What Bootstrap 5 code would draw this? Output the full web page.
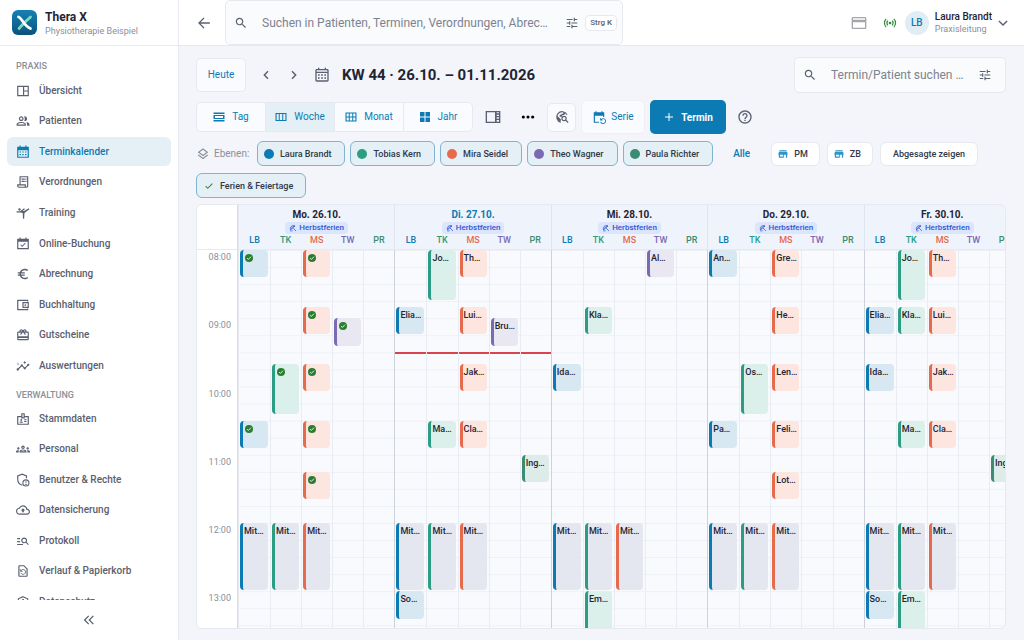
<!DOCTYPE html>
<html lang="de">
<head>
<meta charset="utf-8">
<meta name="viewport" content="width=device-width, initial-scale=1">
<title>Thera X – Terminkalender</title>
<link href="https://cdn.jsdelivr.net/npm/bootstrap@5.3.0/dist/css/bootstrap.min.css" rel="stylesheet">
<style>
  :root { --brand: #0c7bb3; --ink: #1f2433; --soft: #5a6070; --mute: #8b8f9a; --line: #e6e9ef; --tint: #e4f0f6; --ok: #2f8a3b; }
  body { font-family: Roboto, "Liberation Sans", sans-serif; font-size: 10px; line-height: 14px; color: var(--ink); background: #f3f5fa; }
  .ico { width: 14px; height: 14px; fill: currentColor; flex: none; }
  .ico-sm { width: 12px; height: 12px; }
  .ico-xs { width: 10px; height: 10px; }
  .ico-xxs { width: 8px; height: 8px; }
  .ico-lg { width: 16px; height: 16px; }

  .side { width: 179px; background: #fff; border-right: 1px solid var(--line); }
  .side-head { height: 46px; padding: 0 12px; border-bottom: 1px solid var(--line); }
  .side-title { font-size: 12px; line-height: 16px; color: var(--ink); }
  .side-sub, .user-role { font-size: 9px; line-height: 12px; color: var(--mute); }
  .side-nav { min-height: 0; overflow: hidden; padding: 13px 7px 0; }
  .side-label { font-size: 9px; line-height: 14px; margin: 0; padding: 0 9px; color: var(--mute); font-weight: 500; }
  .side-list { display: grid; grid-auto-rows: 1fr; margin: 0; padding: 0; list-style: none; }
  .side-main { min-height: 306px; margin: 3px 0 6px; }
  .side-admin { min-height: 214px; margin-top: 2px; }
  .side-link { height: 29px; padding: 0 9px; gap: 9px; border-radius: 6px; color: var(--soft); text-decoration: none; font-weight: 500; white-space: nowrap; }
  .side-link.active { background: var(--tint); color: var(--brand); }
  .side-foot { height: 40px; }

  .bare { border: 0; background: none; padding: 0; line-height: 1; color: var(--soft); }
  .topbar { height: 46px; background: #fff; border-bottom: 1px solid var(--line); padding: 0 14px 0 18px; }
  .topbar .back { margin-right: 14px; }
  .searchbox { background: #f9fbfd; border: 1px solid var(--line); border-radius: 5px; color: var(--soft); padding: 0 5px 0 8px; }
  .searchbox > svg { margin-right: 14px; }
  .searchbox input { border: 0; background: none; outline: 0; min-width: 0; padding: 0; font-size: 12px; color: var(--ink); text-overflow: ellipsis; }
  .searchbox input::placeholder { color: #7d828f; opacity: 1; }
  .searchbox .filter { margin: 0 6px; }
  .search-main { width: 398px; height: 45px; }
  .search-cal { width: 212px; height: 36px; padding-right: 7px; }
  .key { font-size: 8px; line-height: 14px; font-weight: 500; color: var(--soft); border: 1px solid var(--line); border-radius: 4px; background: #fff; padding: 0 4px; font-family: inherit; }
  .avatar { width: 24px; height: 24px; border-radius: 50%; background: #e0edf5; color: var(--brand); font-size: 10px; font-weight: 500; margin-right: 6px; }
  .user-name { font-size: 10px; line-height: 13px; font-weight: 500; color: var(--ink); }

  .main { min-width: 0; }
  .content { min-height: 0; padding: 11px 18px 11px 17px; }
  .headrow, .toolrow { margin-bottom: 7px; }
  .toolrow { height: 34px; }
  .tool { background: #f9fbfe; border: 1px solid var(--line); border-radius: 5px; color: var(--brand); font-size: 10px; line-height: 14px; padding: 0; }
  .tool:hover { background: #fff; color: var(--brand); border-color: var(--line); }
  .range { font-size: 15px; line-height: 20px; font-weight: 700; margin: 0; }
  .today { width: 50px; height: 34px; }
  .step { margin-left: 12px; }
  .step + .range { margin-left: 12px; }
  .views .tool { width: 70px; height: 30px; gap: 7px; }
  .views .tool.active { background: var(--tint); color: var(--brand); border-color: var(--line); }
  .wide { margin: 0 8px 0 12px; }
  .square { width: 29px; height: 29px; margin-left: 4px; }
  .serie { width: 64px; height: 34px; margin: 0 5px; gap: 5px; border-color: #eef0f5; }
  .new-btn, .new-btn:hover { height: 34px; width: 76px; background: var(--brand); color: #fff; border: 0; font-size: 10px; font-weight: 700; border-radius: 5px; padding: 0; gap: 6px; }
  .help { margin-left: 11px; }

  .layers { gap: 7px 5px; margin-bottom: 6px; }
  .layers-label { min-width: 56px; gap: 4px; }
  .layer, .plain { font-size: 9px; line-height: 14px; font-weight: 500; color: #30394a; border-radius: 6px; white-space: nowrap; }
  .layer { height: 25px; border: 1px solid #7fb5d0; background: var(--tint); padding: 0 13px 0 6px; gap: 6px; }
  .layer.check { padding: 0 12px 0 7px; }
  .layer .dot { width: 10px; height: 10px; border-radius: 50%; }
  .all { font-size: 10px; font-weight: 500; padding: 0 14px 0 15px; }
  .plain { height: 24px; border: 1px solid var(--line); background: #fff; padding: 0 11px 0 6px; gap: 6px; margin-left: 2px; }
  .plain.cancelled { padding: 0 12px; }

  .cal { min-height: 0; overflow: hidden; border: 1px solid var(--line); border-radius: 6px; background: #f9fafd; }
  .times { width: 41px; flex: none; background: #fff; border-right: 1px solid #d8dce4; }
  .cal-head { height: 45px; border-bottom: 1px solid var(--line); flex: none; }
  .slots { height: 387px; display: grid; grid-template-rows: repeat(68, 1fr); grid-template-columns: 100%; flex: none; }
  .times .slots { color: var(--mute); font-size: 9px; line-height: 14px; text-align: right; padding-right: 6px; }
  .week { min-width: 0; overflow: hidden; }
  .days { min-width: 782px; display: grid; grid-template-columns: repeat(5, 1fr); }
  .day { border-left: 1px solid #cdd2dc; }
  .day:first-child { border-left-color: #e6e9ef; }
  .day .cal-head { background: #eff3fb; }
  .day + .day .cal-head { margin-left: -1px; border-left: 1px solid #dfe4ee; }
  .day-name { font-size: 10px; line-height: 14px; font-weight: 700; margin: 0; padding-top: 3px; }
  .holiday { font-size: 8px; line-height: 12px; font-weight: 500; color: #2f55d4; background: #dbe5fb; border-radius: 4px; padding: 0 4px; gap: 2px; }
  .people { display: grid; grid-template-columns: repeat(5, 1fr); }
  .initials { font-size: 9px; line-height: 13px; font-weight: 500; text-align: center; color: var(--c); }
  .person + .person { border-left: 1px solid #e9ecf2; }
  .person { background-image: linear-gradient(#edf0f5 1px, transparent 1px); background-size: 100% calc(100% * 15 / 340); }
  .appt { grid-column: 1; margin: 0 2px 1px 1px; border-left: 3px solid var(--c); border-radius: 4px; background: var(--bg); padding: 1px 0 0 1px; font-size: 9px; line-height: 14px; font-weight: 500; overflow: hidden; white-space: nowrap; }
  .appt svg { display: block; margin: 3px 0 0 1px; color: #2b7d32; }
  .now { grid-column: 1; height: 2px; background: #d8434e; }
  .lb { --c: #0c7bb3; --bg: #d7e8f3; } .tk { --c: #2a9d84; --bg: #dbf0ea; } .ms { --c: #e66a4b; --bg: #fde6e0; }
  .tw { --c: #7a69b3; --bg: #e9e7f2; } .pr { --c: #3a8c72; --bg: #ddece8; }
  .rest { --bg: #e4e7f0; }
  .dot { background: var(--c); }
  .soft { color: var(--soft); }
  .mute { color: var(--mute); }
  .brand { color: var(--brand); }
  .ok { color: var(--ok); }
  .shop { color: #2f95c8; }
  .faint { color: #a5a7ab; }
</style>
</head>
<body class="vh-100 overflow-hidden d-flex">

<svg class="d-none" xmlns="http://www.w3.org/2000/svg">
  <symbol id="i-board" viewBox="0 0 24 24"><path d="M2 3v18h20V3H2zm2 2h8v14H4V5zm16 14h-6v-6h6v6zm0-8h-6V5h6v6z"/></symbol>
  <symbol id="i-people" viewBox="0 0 24 24"><path d="M9 12c2.200 0 4-1.800 4-4s-1.800-4-4-4-4 1.800-4 4 1.800 4 4 4zm0-6c1.100 0 2 .9 2 2s-.9 2-2 2-2-.9-2-2 .9-2 2-2zm0 7.500c-2.700 0-8 1.300-8 4V20h16v-2.500c0-2.700-5.300-4-8-4zM15 18H3v-.5c0-.7 3.100-2 6-2s6 1.300 6 2v.5zM15 4c2.200 0 4 1.800 4 4s-1.800 4-4 4c-.3 0-.7 0-1-.1.600-1.100 1-2.500 1-3.900s-.4-2.800-1-3.900c.3-.1.700-.1 1-.1zm2.500 9.900c2.800.6 5.500 1.800 5.500 3.600V20h-4v-2.500c0-1.400-.6-2.600-1.500-3.600z"/></symbol>
  <symbol id="i-cal" viewBox="0 0 24 24"><path d="M20 3h-2V1h-2v2H8V1H6v2H4c-1.100 0-2 .9-2 2v15c0 1.100.9 2 2 2h16c1.100 0 2-.9 2-2V5c0-1.100-.9-2-2-2zm0 17H4V9h16v11zm0-13H4V5h16v2zM6 11h2.500v2H6zM10.700 11h2.500v2h-2.500zM15.500 11H18v2h-2.500zM6 15.500h2.500v2H6zM10.700 15.500h2.500v2h-2.500zM15.500 15.500H18v2h-2.500z"/></symbol>
  <symbol id="i-calfill" viewBox="0 0 24 24"><path d="M20 3h-2V1h-2v2H8V1H6v2H2v19h20V3h-2zm0 17H4V9h16v11zM6 11h2.500v2H6zM10.700 11h2.500v2h-2.500zM15.500 11H18v2h-2.500zM6 15.500h2.500v2H6zM10.700 15.500h2.500v2h-2.500zM15.500 15.500H18v2h-2.500z"/></symbol>
  <symbol id="i-receipt" viewBox="0 0 24 24"><path d="M6 2v14H2v3c0 1.700 1.300 3 3 3h13c1.700 0 3-1.300 3-3V2H6zm9 18H5c-.6 0-1-.4-1-1v-1h11v2zm4-1c0 .6-.4 1-1 1s-1-.4-1-1v-3H8V4h11v15zM9.500 6H15v2H9.500zM16 6h2v2h-2zM9.500 10H15v2H9.500zM16 10h2v2h-2z"/></symbol>
  <symbol id="i-gym" viewBox="0 0 24 24"><path d="M4 6c0-1.100.9-2 2-2s2 .9 2 2-.9 2-2 2-2-.9-2-2zM1 9h6l7-5 1.310 1.520L11.140 8.500H14L21.800 4 23 5.400 14.500 12 14 22h-2l-.5-10L8 11H1V9z"/></symbol>
  <symbol id="i-avail" viewBox="0 0 24 24"><path d="M16.530 11.060L15.470 10l-4.880 4.880-2.120-2.120-1.060 1.060L10.590 17l5.940-5.940zM20 3h-2V1h-2v2H8V1H6v2H2v18h20V3h-2zm0 16H4V8h16v11z"/></symbol>
  <symbol id="i-euro" viewBox="0 0 24 24"><path d="M15 18.500c-2.510 0-4.680-1.420-5.760-3.500H15v-2H8.580c-.05-.33-.08-.66-.08-1s.03-.67.08-1H15V9H9.240C10.320 6.920 12.500 5.500 15 5.500c1.610 0 3.090.59 4.230 1.570L21 5.300C19.410 3.870 17.300 3 15 3c-3.920 0-7.240 2.510-8.480 6H3v2h3.060c-.04.33-.06.66-.06 1s.02.67.06 1H3v2h3.520c1.240 3.490 4.560 6 8.480 6 2.310 0 4.410-.87 6-2.300l-1.780-1.770c-1.130.98-2.600 1.570-4.220 1.570z"/></symbol>
  <symbol id="i-wallet" viewBox="0 0 24 24"><path d="M2 3v18h19v-3h-2v1H4V5h15v1h2V3H2zm9 4v10h11V7H11zm9 8h-7V9h7v6z"/><circle cx="16" cy="12" r="1.500"/></symbol>
  <symbol id="i-gift" viewBox="0 0 24 24"><path d="M20 6h-2.180c.11-.31.18-.65.18-1 0-1.660-1.340-3-3-3-1.050 0-1.960.54-2.500 1.350l-.5.670-.5-.680C10.960 2.540 10.050 2 9 2 7.340 2 6 3.340 6 5c0 .35.070.69.180 1H4c-1.110 0-1.990.89-1.990 2L2 19c0 1.110.89 2 2 2h16c1.110 0 2-.89 2-2V8c0-1.110-.89-2-2-2zm-5-2c.55 0 1 .45 1 1s-.45 1-1 1-1-.45-1-1 .45-1 1-1zM9 4c.55 0 1 .45 1 1s-.45 1-1 1-1-.45-1-1 .45-1 1-1zm11 15H4v-2h16v2zm0-5H4V8h5.080L7 10.830 8.620 12 11 8.760l1-1.360 1 1.360L15.380 12 17 10.830 14.920 8H20v6z"/></symbol>
  <symbol id="i-insights" viewBox="0 0 24 24"><path d="M21 8c-1.450 0-2.260 1.440-1.930 2.510l-3.550 3.560c-.3-.09-.74-.09-1.040 0l-2.550-2.550C12.270 10.450 11.460 9 10 9c-1.450 0-2.270 1.440-1.930 2.520l-4.560 4.550C2.440 15.740 1 16.550 1 18c0 1.100.9 2 2 2 1.450 0 2.260-1.440 1.930-2.510l4.550-4.560c.3.09.74.09 1.040 0l2.550 2.550C12.730 16.550 13.540 18 15 18c1.450 0 2.270-1.440 1.930-2.520l3.560-3.550c1.070.33 2.510-.48 2.510-1.930 0-1.100-.9-2-2-2z"/><path d="M15 9l.94-2.070L18 6l-2.060-.93L15 3l-.92 2.070L12 6l2.080.93zM3.500 11L4 9l2-.5L4 8l-.5-2L3 8l-2 .5L3 9z"/></symbol>
  <symbol id="i-badge" viewBox="0 0 24 24"><path d="M22 7h-7V2H9v5H2v15h20V7zM11 4h2v5h-2V4zm9 16H4V9h5v2h6V9h5v11z"/><circle cx="9" cy="13.800" r="1.600"/><path d="M6 18.500c0-1.500 1.500-2.300 3-2.300s3 .8 3 2.300zM14 12.500h4V14h-4zM14 15.500h4V17h-4z"/></symbol>
  <symbol id="i-groups" viewBox="0 0 24 24"><path d="M4 13c1.100 0 2-.9 2-2s-.9-2-2-2-2 .9-2 2 .9 2 2 2zm1.130 1.100C4.760 14.040 4.390 14 4 14c-.99 0-1.930.21-2.780.58C.48 14.900 0 15.620 0 16.430V18h4.500v-1.610c0-.83.23-1.610.63-2.290zM20 13c1.100 0 2-.9 2-2s-.9-2-2-2-2 .9-2 2 .9 2 2 2zm4 3.430c0-.81-.48-1.530-1.220-1.850-.85-.37-1.790-.58-2.780-.58-.39 0-.76.04-1.130.1.4.68.63 1.460.63 2.290V18H24v-1.570zM16.240 13.650c-1.170-.52-2.610-.9-4.240-.9s-3.070.39-4.240.9C6.680 14.130 6 15.210 6 16.390V18h12v-1.610c0-1.180-.68-2.260-1.760-2.740zM8.070 16c.09-.23.13-.39.91-.69.97-.38 1.990-.56 3.020-.56s2.050.18 3.020.56c.77.3.81.46.91.69H8.070zM12 8c.55 0 1 .45 1 1s-.45 1-1 1-1-.45-1-1 .45-1 1-1m0-2c-1.660 0-3 1.340-3 3s1.340 3 3 3 3-1.340 3-3-1.340-3-3-3z"/></symbol>
  <symbol id="i-admin" viewBox="0 0 24 24"><path d="M11 21C6.500 19.500 3 15.500 3 11V5l7.500-3L18 5v4" fill="none" stroke="currentColor" stroke-width="2"/><circle cx="17" cy="17" r="5.200" fill="none" stroke="currentColor" stroke-width="1.800"/><circle cx="17" cy="15.500" r="1.300"/><path d="M14.500 19.300c.5-1.300 4.500-1.300 5 0-1.200 1.400-3.800 1.400-5 0z"/></symbol>
  <symbol id="i-cloud" viewBox="0 0 24 24"><path d="M19.350 10.040C18.670 6.590 15.640 4 12 4 9.110 4 6.600 5.640 5.350 8.040 2.340 8.360 0 10.910 0 14c0 3.310 2.690 6 6 6h13c2.760 0 5-2.240 5-5 0-2.640-2.050-4.780-4.650-4.960zM19 18H6c-2.210 0-4-1.790-4-4 0-2.050 1.530-3.760 3.560-3.970l1.070-.11.5-.95C8.080 7.140 9.940 6 12 6c2.620 0 4.880 1.860 5.390 4.430l.3 1.500 1.530.11c1.560.1 2.780 1.410 2.780 2.960 0 1.650-1.350 3-3 3zM8 13h2.550v3h2.900v-3H16l-4-4z"/></symbol>
  <symbol id="i-log" viewBox="0 0 24 24"><path d="M7 9H2V7h5v2zm0 3H2v2h5v-2zm13.590 7l-3.830-3.830c-.8.52-1.740.83-2.760.83-2.760 0-5-2.240-5-5s2.240-5 5-5 5 2.240 5 5c0 1.020-.31 1.960-.83 2.750L22 17.590 20.590 19zM17 11c0-1.650-1.350-3-3-3s-3 1.350-3 3 1.350 3 3 3 3-1.350 3-3zM2 19h10v-2H2v2z"/></symbol>
  <symbol id="i-restore" viewBox="0 0 24 24"><path d="M14 2H6c-1.100 0-2 .9-2 2v16c0 1.100.9 2 2 2h12c1.100 0 2-.9 2-2V8l-6-6zm4 18H6V4h7.200L18 8.800V20z"/><path d="M8.500 11.500a4.200 4.200 0 1 1-.3 3.500M8 9v3.500h3.500" fill="none" stroke="currentColor" stroke-width="1.500"/></symbol>
  <symbol id="i-shield" viewBox="0 0 24 24"><path d="M12 3l8 3.500V12c0 4.500-3.400 8-8 9.500C7.400 20 4 16.500 4 12V6.500z" fill="none" stroke="currentColor" stroke-width="2"/><circle cx="12" cy="9" r="2"/></symbol>
  <symbol id="i-dbl" viewBox="0 0 24 24"><path d="M11.500 5l-7 7 7 7M19.500 5l-7 7 7 7" fill="none" stroke="currentColor" stroke-width="2.200"/></symbol>
  <symbol id="i-back" viewBox="0 0 24 24"><path d="M22 10.800H6.100l6.700-6.600L11.200 2.500 1.800 12l9.400 9.500 1.600-1.700-6.700-6.600H22z"/></symbol>
  <symbol id="i-search" viewBox="0 0 24 24"><path d="M15.500 14h-.79l-.28-.27C15.410 12.590 16 11.110 16 9.500 16 5.910 13.090 3 9.500 3S3 5.910 3 9.500 5.910 16 9.500 16c1.610 0 3.090-.59 4.230-1.570l.27.28v.79l5 4.990L20.490 19l-4.990-5zm-6 0C7.010 14 5 11.990 5 9.500S7.010 5 9.500 5 14 7.010 14 9.500 11.990 14 9.500 14z"/></symbol>
  <symbol id="i-tune" viewBox="0 0 24 24"><path d="M3 17v2h6v-2H3zM3 5v2h10V5H3zm10 16v-2h8v-2h-8v-2h-2v6h2zM7 9v2H3v2h4v2h2V9H7zm14 4v-2H11v2h10zm-6-4h2V7h4V5h-4V3h-2v6z"/></symbol>
  <symbol id="i-card" viewBox="0 0 24 24"><path d="M21 3H3c-1.100 0-2 .9-2 2v14c0 1.100.9 2 2 2h18c1.100 0 2-.9 2-2V5c0-1.100-.9-2-2-2zm0 16H3v-8h18v8zm0-12H3V5h18v2z"/></symbol>
  <symbol id="i-signal" viewBox="0 0 24 24"><circle cx="12" cy="12" r="2.300"/><path d="M5.500 5c-4 4-4 10 0 14M18.500 5c4 4 4 10 0 14M8.300 8c-2 2.400-2 5.600 0 8M15.700 8c2 2.400 2 5.600 0 8" fill="none" stroke="currentColor" stroke-width="2"/></symbol>
  <symbol id="i-down" viewBox="0 0 24 24"><path d="M5 8.500l7 7 7-7" fill="none" stroke="currentColor" stroke-width="2.400"/></symbol>
  <symbol id="i-left" viewBox="0 0 24 24"><path d="M15 6.500L9.500 12l5.500 5.500" fill="none" stroke="currentColor" stroke-width="2.200"/></symbol>
  <symbol id="i-right" viewBox="0 0 24 24"><path d="M9 6.500l5.500 5.500L9 17.500" fill="none" stroke="currentColor" stroke-width="2.200"/></symbol>
  <symbol id="i-day" viewBox="0 0 24 24"><path d="M1 3h22v3H1zM1 18h22v3H1zM1 8h22v8H1zm3 2v4h16v-4z" fill-rule="evenodd"/></symbol>
  <symbol id="i-week" viewBox="0 0 24 24"><path d="M1 4v16h22V4H1zm6.500 14H3.200V6h4.300v12zm7 0h-5V6h5v12zm6.300 0h-4.300V6h4.300v12z"/></symbol>
  <symbol id="i-month" viewBox="0 0 24 24"><path d="M1 3v18h22V3H1zm6.500 2.200V11H3.200V5.200h4.300zm7 0V11h-5V5.200h5zm6.300 0V11h-4.300V5.200h4.300zM3.200 18.800V13h4.300v5.800H3.200zm6.300 0V13h5v5.800h-5zm7 0V13h4.300v5.800h-4.300z"/></symbol>
  <symbol id="i-year" viewBox="0 0 24 24"><path d="M2 2h9v9H2zM13 2h9v9h-9zM2 13h9v9H2zM13 13h9v9h-9z"/></symbol>
  <symbol id="i-panel" viewBox="0 0 24 24"><path d="M1 3v18h22V3H1zm14 16H3V5h12v14zm6 0h-3.500v-2.500H21V19zm0-4.500h-3.500v-2H21v2zm0-4h-3.500v-2H21v2zm0-4h-3.500V5H21v1.500z"/></symbol>
  <symbol id="i-dots" viewBox="0 0 24 24"><circle cx="4" cy="12" r="2.700"/><circle cx="12" cy="12" r="2.700"/><circle cx="20" cy="12" r="2.700"/></symbol>
  <symbol id="i-globe" viewBox="0 0 24 24"><path d="M20.500 8A9.200 9.200 0 1 0 10 21" fill="none" stroke="currentColor" stroke-width="2"/><path d="M3.500 10l6.500 6v3l-2 1c-3-2-5-5-4.500-10zM8 8h3V6.500h3V3.500l4 2L16 8l-4 1.500v2H8z"/><circle cx="15.500" cy="14.500" r="3.600" fill="none" stroke="currentColor" stroke-width="2"/><path d="M18 17l4.500 4.500" stroke="currentColor" stroke-width="2.200"/></symbol>
  <symbol id="i-repeat" viewBox="0 0 24 24"><path d="M21 12V4h-3V2h-2v2H8V2H6v2H3v18h9v-2H5V10h14v2h2zm-5.360 8c.43 1.450 1.770 2.500 3.360 2.500 1.930 0 3.500-1.570 3.500-3.500s-1.570-3.500-3.500-3.500c-.95 0-1.820.38-2.450 1H18V18h-4v-4h1.500v1.430c.9-.88 2.140-1.430 3.500-1.430 2.760 0 5 2.240 5 5s-2.240 5-5 5c-2.420 0-4.440-1.720-4.900-4h1.540z"/></symbol>
  <symbol id="i-plus" viewBox="0 0 24 24"><path d="M20 13h-7v7h-2v-7H4v-2h7V4h2v7h7v2z"/></symbol>
  <symbol id="i-help" viewBox="0 0 24 24"><path d="M11 18h2v-2h-2v2zm1-16C6.480 2 2 6.480 2 12s4.480 10 10 10 10-4.480 10-10S17.520 2 12 2zm0 18c-4.410 0-8-3.590-8-8s3.590-8 8-8 8 3.590 8 8-3.590 8-8 8zm0-14c-2.210 0-4 1.790-4 4h2c0-1.100.9-2 2-2s2 .9 2 2c0 2-3 1.750-3 5h2c0-2.250 3-2.500 3-5 0-2.210-1.790-4-4-4z"/></symbol>
  <symbol id="i-layers" viewBox="0 0 24 24"><path d="M11.990 18.540l-7.370-5.730L3 14.070l9 7 9-7-1.630-1.270zM12 16l7.360-5.730L21 9l-9-7-9 7 1.630 1.270L12 16zm0-11.470L17.740 9 12 13.470 6.260 9 12 4.530z"/></symbol>
  <symbol id="i-store" viewBox="0 0 24 24"><path d="M21 3H3v3h18V3zm2 11v-2l-1-5H2l-1 5v2h1v7h12v-7h5v7h3v-7h1zm-11 4H5v-4h7v4z"/></symbol>
  <symbol id="i-check" viewBox="0 0 24 24"><path d="M4 12.500l5 5L20 6.500" fill="none" stroke="currentColor" stroke-width="2.500"/></symbol>
  <symbol id="i-done" viewBox="0 0 24 24"><circle cx="12" cy="12" r="12"/><path d="M6 12.300l4 4L18 8" fill="none" stroke="#fff" stroke-width="2.600"/></symbol>
  <symbol id="i-beach" viewBox="0 0 24 24"><path d="M5 18C1 11 8 2 18 6L11 11z" fill="none" stroke="currentColor" stroke-width="2.400"/><path d="M8 14C8 10 12 7 18 6M12 12l9 9M3 21c3-2 5 1 8-1" fill="none" stroke="currentColor" stroke-width="2.200"/></symbol>
</svg>

<aside class="side d-flex flex-column flex-shrink-0">
  <div class="side-head d-flex align-items-center gap-2 flex-shrink-0">
    <svg width="25" height="25" viewBox="0 0 25 25" role="img" aria-label="Thera X Logo">
      <defs><linearGradient id="logo-bg" x1="0" y1="0" x2="0" y2="1"><stop offset="0" stop-color="#1682b4"/><stop offset="1" stop-color="#0b527c"/></linearGradient></defs>
      <rect width="25" height="25" rx="6" fill="url(#logo-bg)"/>
      <path d="M18.500 7L12.500 12.500 7 18.500" stroke="#7fd6c2" stroke-width="2.800" stroke-linecap="round" fill="none"/>
      <path d="M6.500 7C10 8 12 16 18.500 18.500" stroke="#fff" stroke-width="2.800" stroke-linecap="round" fill="none"/>
    </svg>
    <div>
      <div class="side-title fw-bold">Thera X</div>
      <div class="side-sub">Physiotherapie Beispiel</div>
    </div>
  </div>
  <nav class="side-nav flex-grow-1" aria-label="Hauptmenü">
    <h2 class="side-label">PRAXIS</h2>
    <ul class="side-list side-main">
      <li><a class="side-link d-flex align-items-center" href="#"><svg class="ico"><use href="#i-board"/></svg>Übersicht</a></li>
      <li><a class="side-link d-flex align-items-center" href="#"><svg class="ico"><use href="#i-people"/></svg>Patienten</a></li>
      <li><a class="side-link d-flex align-items-center active" aria-current="page" href="#"><svg class="ico"><use href="#i-calfill"/></svg>Terminkalender</a></li>
      <li><a class="side-link d-flex align-items-center" href="#"><svg class="ico"><use href="#i-receipt"/></svg>Verordnungen</a></li>
      <li><a class="side-link d-flex align-items-center" href="#"><svg class="ico"><use href="#i-gym"/></svg>Training</a></li>
      <li><a class="side-link d-flex align-items-center" href="#"><svg class="ico"><use href="#i-avail"/></svg>Online-Buchung</a></li>
      <li><a class="side-link d-flex align-items-center" href="#"><svg class="ico"><use href="#i-euro"/></svg>Abrechnung</a></li>
      <li><a class="side-link d-flex align-items-center" href="#"><svg class="ico"><use href="#i-wallet"/></svg>Buchhaltung</a></li>
      <li><a class="side-link d-flex align-items-center" href="#"><svg class="ico"><use href="#i-gift"/></svg>Gutscheine</a></li>
      <li><a class="side-link d-flex align-items-center" href="#"><svg class="ico"><use href="#i-insights"/></svg>Auswertungen</a></li>
    </ul>
    <h2 class="side-label">VERWALTUNG</h2>
    <ul class="side-list side-admin">
      <li><a class="side-link d-flex align-items-center" href="#"><svg class="ico"><use href="#i-badge"/></svg>Stammdaten</a></li>
      <li><a class="side-link d-flex align-items-center" href="#"><svg class="ico"><use href="#i-groups"/></svg>Personal</a></li>
      <li><a class="side-link d-flex align-items-center" href="#"><svg class="ico"><use href="#i-admin"/></svg>Benutzer &amp; Rechte</a></li>
      <li><a class="side-link d-flex align-items-center" href="#"><svg class="ico"><use href="#i-cloud"/></svg>Datensicherung</a></li>
      <li><a class="side-link d-flex align-items-center" href="#"><svg class="ico"><use href="#i-log"/></svg>Protokoll</a></li>
      <li><a class="side-link d-flex align-items-center" href="#"><svg class="ico"><use href="#i-restore"/></svg>Verlauf &amp; Papierkorb</a></li>
      <li><a class="side-link d-flex align-items-center" href="#"><svg class="ico"><use href="#i-shield"/></svg>Datenschutz</a></li>
    </ul>
  </nav>
  <div class="side-foot d-flex align-items-center justify-content-center flex-shrink-0">
    <button type="button" class="bare" aria-label="Menü einklappen"><svg class="ico"><use href="#i-dbl"/></svg></button>
  </div>
</aside>

<div class="main flex-grow-1 d-flex flex-column">
  <header class="topbar d-flex align-items-center flex-shrink-0">
    <button type="button" class="bare back" aria-label="Zurück"><svg class="ico d-block"><use href="#i-back"/></svg></button>
    <div class="searchbox search-main d-flex align-items-center">
      <svg class="ico"><use href="#i-search"/></svg>
      <input class="flex-grow-1" type="text" aria-label="Suche" placeholder="Suchen in Patienten, Terminen, Verordnungen, Abrec…">
      <button type="button" class="bare filter" aria-label="Filter"><svg class="ico d-block"><use href="#i-tune"/></svg></button>
      <kbd class="key">Strg K</kbd>
    </div>
    <div class="ms-auto d-flex align-items-center">
      <svg class="ico ico-lg me-3 faint"><use href="#i-card"/></svg>
      <svg class="ico me-2 ok"><use href="#i-signal"/></svg>
      <button type="button" class="bare d-flex align-items-center text-start">
        <span class="avatar d-flex align-items-center justify-content-center">LB</span>
        <span class="me-1"><span class="user-name d-block">Laura Brandt</span><span class="user-role d-block">Praxisleitung</span></span>
        <svg class="ico"><use href="#i-down"/></svg>
      </button>
    </div>
  </header>

  <main class="content flex-grow-1 d-flex flex-column">
    <div class="headrow d-flex align-items-center flex-shrink-0">
      <button type="button" class="btn tool today">Heute</button>
      <button type="button" class="bare step" aria-label="Vorherige Woche"><svg class="ico ico-lg d-block"><use href="#i-left"/></svg></button>
      <button type="button" class="bare step" aria-label="Nächste Woche"><svg class="ico ico-lg d-block"><use href="#i-right"/></svg></button>
      <button type="button" class="bare step" aria-label="Datum wählen"><svg class="ico ico-lg d-block"><use href="#i-cal"/></svg></button>
      <h1 class="range">KW 44 · 26.10. – 01.11.2026</h1>
      <div class="searchbox search-cal d-flex align-items-center ms-auto">
        <svg class="ico"><use href="#i-search"/></svg>
        <input class="flex-grow-1" type="text" aria-label="Termin oder Patient suchen" placeholder="Termin/Patient suchen …">
        <button type="button" class="bare filter" aria-label="Suchfilter"><svg class="ico d-block"><use href="#i-tune"/></svg></button>
      </div>
    </div>

    <div class="toolrow d-flex align-items-center flex-shrink-0">
      <div class="btn-group views" role="group" aria-label="Ansicht">
        <button type="button" class="btn tool d-flex align-items-center justify-content-center"><svg class="ico ico-sm"><use href="#i-day"/></svg>Tag</button>
        <button type="button" class="btn tool d-flex align-items-center justify-content-center active"><svg class="ico ico-sm"><use href="#i-week"/></svg>Woche</button>
        <button type="button" class="btn tool d-flex align-items-center justify-content-center"><svg class="ico ico-sm"><use href="#i-month"/></svg>Monat</button>
        <button type="button" class="btn tool d-flex align-items-center justify-content-center"><svg class="ico ico-sm"><use href="#i-year"/></svg>Jahr</button>
      </div>
      <button type="button" class="bare wide" aria-label="Seitenleiste"><svg class="ico ico-lg d-block"><use href="#i-panel"/></svg></button>
      <button type="button" class="bare wide text-black" aria-label="Mehr"><svg class="ico d-block"><use href="#i-dots"/></svg></button>
      <button type="button" class="btn tool square soft d-flex align-items-center justify-content-center" aria-label="Termin finden"><svg class="ico"><use href="#i-globe"/></svg></button>
      <button type="button" class="btn tool serie d-flex align-items-center justify-content-center"><svg class="ico"><use href="#i-repeat"/></svg>Serie</button>
      <button type="button" class="btn new-btn d-flex align-items-center justify-content-center"><svg class="ico ico-sm"><use href="#i-plus"/></svg>Termin</button>
      <button type="button" class="bare help" aria-label="Hilfe"><svg class="ico ico-lg d-block"><use href="#i-help"/></svg></button>
    </div>

    <div class="layers d-flex flex-wrap align-items-center flex-shrink-0">
      <span class="layers-label d-flex align-items-center mute"><svg class="ico"><use href="#i-layers"/></svg>Ebenen:</span>
      <button type="button" class="layer lb d-flex align-items-center" aria-pressed="true"><span class="dot"></span>Laura Brandt</button>
      <button type="button" class="layer tk d-flex align-items-center" aria-pressed="true"><span class="dot"></span>Tobias Kern</button>
      <button type="button" class="layer ms d-flex align-items-center" aria-pressed="true"><span class="dot"></span>Mira Seidel</button>
      <button type="button" class="layer tw d-flex align-items-center" aria-pressed="true"><span class="dot"></span>Theo Wagner</button>
      <button type="button" class="layer pr d-flex align-items-center" aria-pressed="true"><span class="dot"></span>Paula Richter</button>
      <button type="button" class="bare brand all">Alle</button>
      <button type="button" class="plain d-flex align-items-center"><svg class="ico ico-xs shop"><use href="#i-store"/></svg>PM</button>
      <button type="button" class="plain d-flex align-items-center"><svg class="ico ico-xs shop"><use href="#i-store"/></svg>ZB</button>
      <button type="button" class="plain cancelled">Abgesagte zeigen</button>
      <button type="button" class="layer check d-flex align-items-center" aria-pressed="true"><svg class="ico ico-xs ok"><use href="#i-check"/></svg>Ferien &amp; Feiertage</button>
    </div>

    <section class="cal d-flex flex-grow-1" aria-label="Wochenkalender">
      <div class="times"><div class="cal-head"></div><div class="slots" id="hours"></div></div>
      <div class="week flex-grow-1"><div class="days" id="days"></div></div>
    </section>
  </main>
</div>

<script src="https://cdn.jsdelivr.net/npm/bootstrap@5.3.0/dist/js/bootstrap.bundle.min.js"></script>
<script>
  // Each entry: [person, start, minutes, label]; an empty label marks a finished appointment.
  const people = ['lb', 'tk', 'ms', 'tw', 'pr'];
  const pause = (...who) => who.map(p => [p, '12:00', 60, 'Mit…', 'rest']);
  const week = [
    { name: 'Mo. 26.10.', items: [['lb', '8:00', 25, ''], ['ms', '8:00', 25, ''], ['ms', '8:50', 25, ''], ['tw', '9:00', 25, ''], ['tk', '9:40', 45, ''], ['ms', '9:40', 25, ''],
      ['lb', '10:30', 25, ''], ['ms', '10:30', 25, ''], ['ms', '11:15', 25, ''], ...pause('lb', 'tk', 'ms')] },
    { name: 'Di. 27.10.', now: '9:30', items: [['tk', '8:00', 45, 'Jo…'], ['ms', '8:00', 25, 'Th…'], ['lb', '8:50', 25, 'Elia…'], ['ms', '8:50', 25, 'Lui…'], ['tw', '9:00', 25, 'Bru…'],
      ['ms', '9:40', 25, 'Jak…'], ['tk', '10:30', 25, 'Ma…'], ['ms', '10:30', 25, 'Cla…'], ['pr', '11:00', 25, 'Ing…'], ...pause('lb', 'tk', 'ms'), ['lb', '13:00', 25, 'So…']] },
    { name: 'Mi. 28.10.', items: [['tw', '8:00', 25, 'Al…'], ['tk', '8:50', 25, 'Kla…'], ['lb', '9:40', 25, 'Ida…'], ...pause('lb', 'tk', 'ms'), ['tk', '13:00', 40, 'Em…']] },
    { name: 'Do. 29.10.', items: [['lb', '8:00', 25, 'An…'], ['ms', '8:00', 25, 'Gre…'], ['ms', '8:50', 25, 'He…'], ['tk', '9:40', 45, 'Os…'], ['ms', '9:40', 25, 'Len…'],
      ['lb', '10:30', 25, 'Pa…'], ['ms', '10:30', 25, 'Feli…'], ['ms', '11:15', 25, 'Lot…'], ...pause('lb', 'tk', 'ms')] },
    { name: 'Fr. 30.10.', items: [['tk', '8:00', 45, 'Jo…'], ['ms', '8:00', 25, 'Th…'], ['lb', '8:50', 25, 'Elia…'], ['tk', '8:50', 25, 'Kla…'], ['ms', '8:50', 25, 'Lui…'], ['lb', '9:40', 25, 'Ida…'],
      ['ms', '9:40', 25, 'Jak…'], ['tk', '10:30', 25, 'Ma…'], ['ms', '10:30', 25, 'Cla…'], ['pr', '11:00', 25, 'Ing…'], ...pause('lb', 'tk', 'ms'), ['lb', '13:00', 25, 'So…'], ['tk', '13:00', 40, 'Em…']] }
  ];
  // Rows of the time grid are five minutes high, starting at 08:00.
  const row = t => { const [h, m] = t.split(':').map(Number); return ((h - 8) * 60 + m) / 5 + 1; };
  const appt = ([p, t, min, label, kind]) =>
    `<div class="appt ${p} ${kind || ''}" style="grid-row:${row(t)} / span ${min / 5}">${label || '<svg class="ico ico-xxs"><use href="#i-done"/></svg>'}</div>`;

  document.getElementById('hours').innerHTML = [8, 9, 10, 11, 12, 13]
    .map(h => `<div style="grid-row:${(h - 8) * 12 + 1} / span 8">${String(h).padStart(2, '0')}:00</div>`).join('');
  document.getElementById('days').innerHTML = week.map(d => `
    <div class="day">
      <div class="cal-head d-flex flex-column align-items-center">
        <h2 class="day-name ${d.now ? 'brand' : ''}">${d.name}</h2>
        <span class="holiday d-flex align-items-center"><svg class="ico ico-xxs"><use href="#i-beach"/></svg>Herbstferien</span>
        <div class="people w-100">${people.map(p => `<span class="initials ${p}">${p.toUpperCase()}</span>`).join('')}</div>
      </div>
      <div class="people">${people.map(p => `<div class="person slots">${d.items.filter(i => i[0] === p).map(appt).join('')}${d.now ? `<div class="now" style="grid-row:${row(d.now)}"></div>` : ''}</div>`).join('')}</div>
    </div>`).join('');
</script>
</body>
</html>
